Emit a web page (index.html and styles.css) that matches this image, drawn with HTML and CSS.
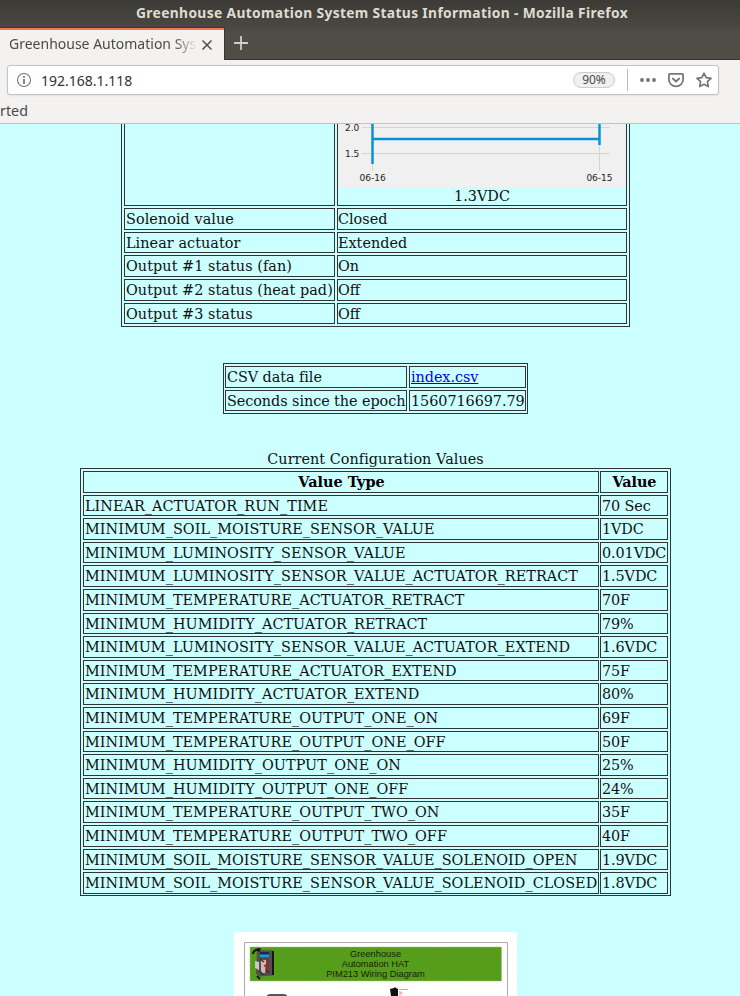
FILE: index.html
```html
<!DOCTYPE html>
<html lang="en">
<head>
<meta charset="utf-8">
<title>Greenhouse Automation System Status Information</title>
<link rel="stylesheet" href="styles.css">
</head>
<body>
<header class="browser">
  <div class="titlebar"><span class="window-title">Greenhouse Automation System Status Information - Mozilla Firefox</span></div>
  <div class="tabs">
    <div class="tab"><span class="tab-title">Greenhouse Automation System</span>
      <svg class="close" width="12" height="12" viewBox="0 0 12 12"><path d="M1.5 1.5l9 9m0-9l-9 9" stroke="#555" stroke-width="1.6" fill="none"/></svg>
    </div>
    <svg class="plus" width="14" height="14" viewBox="0 0 14 14"><path d="M7 0v14M0 7h14" stroke="#d0cec8" stroke-width="1.8"/></svg>
  </div>
  <div class="nav">
    <div class="urlbar">
      <svg width="16" height="16" viewBox="0 0 16 16" fill="none" stroke="#777"><circle cx="8" cy="8" r="6.5" stroke-width="1.1"/><path d="M8 7v5M8 4v1.8" stroke-width="1.8"/></svg>
      <span class="url">192.168.1.118</span>
      <span class="zoom">90%</span>
      <span class="divider"></span>
      <svg class="dots" width="16" height="16" viewBox="0 0 16 16" fill="#777"><circle cx="2" cy="8" r="2"/><circle cx="8" cy="8" r="2"/><circle cx="14" cy="8" r="2"/></svg>
      <svg class="pocket" width="16" height="16" viewBox="0 0 16 16" fill="none" stroke="#777" stroke-width="1.8" stroke-linejoin="round" stroke-linecap="round"><path d="M1.7 1.9h12.6q.8 0 .8.8v4.8a7.1 6.8 0 0 1-14.2 0V2.7q0-.8.8-.8z"/><path d="M4.8 6.5L8 9.5l3.2-3"/></svg>
      <svg class="star" width="16" height="16" viewBox="0 0 16 16" fill="none" stroke="#777" stroke-width="1.7" stroke-linejoin="round"><path d="M8 1.2l2.1 4.5 4.9.6-3.6 3.4.9 4.9L8 12.2l-4.3 2.4.9-4.9L1 6.3l4.9-.6z"/></svg>
    </div>
  </div>
  <div class="bookmarks">rted</div>
</header>
<main>
  <div class="table status">
    <div class="cell open"></div>
    <div class="cell open chart">
      <svg width="288" height="63" viewBox="338 124 288 63">
        <rect x="338" y="124" width="288" height="63" fill="#f0f0f0"/>
        <path d="M362 127.5H610M362 153.5H610M372.5 124V171M599.5 124V171" stroke="#d5d5d5"/>
        <path d="M372.5 124V164M372.5 139H599.5M599.5 124V145" stroke="#0a90d6" stroke-width="2.5" fill="none"/>
        <g class="ticks"><text x="345" y="130.5">2.0</text><text x="345" y="157">1.5</text><text x="359.6" y="181">06-16</text><text x="586.4" y="181">06-15</text></g>
      </svg>
      <div class="reading">1.3VDC</div>
    </div>
    <div class="cell">Solenoid value</div><div class="cell">Closed</div>
    <div class="cell">Linear actuator</div><div class="cell">Extended</div>
    <div class="cell">Output #1 status (fan)</div><div class="cell">On</div>
    <div class="cell">Output #2 status (heat pad)</div><div class="cell">Off</div>
    <div class="cell">Output #3 status</div><div class="cell">Off</div>
  </div>
  <div class="table csv">
    <div class="cell">CSV data file</div><div class="cell"><a href="index.csv">index.csv</a></div>
    <div class="cell">Seconds since the epoch</div><div class="cell">1560716697.79</div>
  </div>
  <div class="caption">Current Configuration Values</div>
  <div class="table config">
    <div class="cell head">Value Type</div><div class="cell head">Value</div>
    <div class="cell">LINEAR_ACTUATOR_RUN_TIME</div><div class="cell">70 Sec</div>
    <div class="cell">MINIMUM_SOIL_MOISTURE_SENSOR_VALUE</div><div class="cell">1VDC</div>
    <div class="cell">MINIMUM_LUMINOSITY_SENSOR_VALUE</div><div class="cell">0.01VDC</div>
    <div class="cell">MINIMUM_LUMINOSITY_SENSOR_VALUE_ACTUATOR_RETRACT</div><div class="cell">1.5VDC</div>
    <div class="cell">MINIMUM_TEMPERATURE_ACTUATOR_RETRACT</div><div class="cell">70F</div>
    <div class="cell">MINIMUM_HUMIDITY_ACTUATOR_RETRACT</div><div class="cell">79%</div>
    <div class="cell">MINIMUM_LUMINOSITY_SENSOR_VALUE_ACTUATOR_EXTEND</div><div class="cell">1.6VDC</div>
    <div class="cell">MINIMUM_TEMPERATURE_ACTUATOR_EXTEND</div><div class="cell">75F</div>
    <div class="cell">MINIMUM_HUMIDITY_ACTUATOR_EXTEND</div><div class="cell">80%</div>
    <div class="cell">MINIMUM_TEMPERATURE_OUTPUT_ONE_ON</div><div class="cell">69F</div>
    <div class="cell">MINIMUM_TEMPERATURE_OUTPUT_ONE_OFF</div><div class="cell">50F</div>
    <div class="cell">MINIMUM_HUMIDITY_OUTPUT_ONE_ON</div><div class="cell">25%</div>
    <div class="cell">MINIMUM_HUMIDITY_OUTPUT_ONE_OFF</div><div class="cell">24%</div>
    <div class="cell">MINIMUM_TEMPERATURE_OUTPUT_TWO_ON</div><div class="cell">35F</div>
    <div class="cell">MINIMUM_TEMPERATURE_OUTPUT_TWO_OFF</div><div class="cell">40F</div>
    <div class="cell">MINIMUM_SOIL_MOISTURE_SENSOR_VALUE_SOLENOID_OPEN</div><div class="cell">1.9VDC</div>
    <div class="cell">MINIMUM_SOIL_MOISTURE_SENSOR_VALUE_SOLENOID_CLOSED</div><div class="cell">1.8VDC</div>
  </div>
  <svg class="wiring" width="283" height="64" viewBox="234 932 283 64">
    <rect x="234" y="932" width="283" height="64" fill="#fff"/>
    <path d="M244.5 996V942.5H507.5V996" fill="none" stroke="#aaa"/>
    <rect x="250" y="947" width="251.5" height="34" fill="#579d1c"/>
    <rect x="250" y="947" width="251.5" height="34" fill="none" stroke="#9bc578" stroke-width=".7" stroke-dasharray="2 1"/>
    <path d="M257 950l16 .5v25l-13 1-4-3z" fill="#554e4e"/>
    <path d="M252.500 954q2-5 8-5M273 951v24M257 976l3 3M257 950l3 1" stroke="#151515" stroke-width="2" fill="none"/>
    <rect x="260" y="952" width="9" height="3" fill="#182b40"/>
    <rect x="260" y="954.500" width="9" height="2.5" fill="#199ce8"/>
    <path d="M255 961l4 1v8l-4-2z" fill="#c7c7c7"/>
    <path d="M261 960h5v5l-1 8h-4z" fill="#d4b7a7"/>
    <path d="M267 958l1 5-2 5 3 4M264 966l5-2" stroke="#a51f28" stroke-width="1.5" fill="none"/>
    <path d="M260 959l4 3m-4 9l3 4m3-5l3 3" stroke="#303438" stroke-width="1.5"/>
    <g class="diagram-title"><text x="375.5" y="956.7">Greenhouse</text><text x="375.5" y="967">Automation HAT</text><text x="375.5" y="977.3">PIM213 Wiring Diagram</text></g>
    <path d="M267 996v-1l3-1h14l3 1v1z" fill="#58545b"/>
    <path d="M390 989l4-1 1-1 1 1 2 1v7h-7z" fill="#111"/>
    <path d="M399 989.5h9M400 991v5M400 993h3" stroke="#ec7b85" stroke-width=".8" fill="none"/>
  </svg>
</main>
</body>
</html>
```
FILE: styles.css
```css
* { box-sizing: border-box; }
body { margin: 0; width: 740px; height: 996px; overflow: hidden; background: #cff; color: #111; font: 14.4px/20.6px "DejaVu Serif", serif; }
svg { display: block; flex: none; }
.browser { height: 124px; background: #f3f2f1; border-bottom: 1px solid #c4c2c0; font-family: "Noto Sans", sans-serif; color: #4a4a4a; }
.titlebar { height: 27px; background: linear-gradient(#3b3a36, #4b4842); color: #dfdbd2; font-size: 13.8px; font-weight: 700; line-height: 26px; display: flex; padding-left: 136px; white-space: nowrap; }
.window-title { letter-spacing: 0.35px; }
.tabs { height: 33px; background: linear-gradient(#4b4842, #504d46 20%); border-bottom: 1px solid #37352f; display: flex; }
.tab { width: 225px; height: 33px; flex: none; background: #f3f2f1; border-top: 1px solid #393631; border-right: 1px solid #393631; box-shadow: inset 0 2px #ef7b52; padding: 0 0 0 9px; display: flex; align-items: center; }
.tab-title { width: 188px; overflow: hidden; white-space: nowrap; font-size: 14px; line-height: 30px; mask-image: linear-gradient(90deg, #000 165px, transparent 188px); }
.close { margin-left: 4px; margin-top: 1px; }
.plus { margin: 9px 0 0 9px; }
.nav { height: 40px; padding: 5px 21px 5px 7px; }
.urlbar { height: 30px; border: 1px solid #c5c2bf; border-radius: 3px; background: #fff; box-shadow: 0 1px 2px #0001; display: flex; align-items: center; padding-left: 8px; }
.url { margin-left: 9px; padding-top: 2px; width: 532px; font-size: 14px; color: #333; }
.zoom { width: 42px; height: 16px; flex: none; border: 1px solid #ccc; border-radius: 8px; background: #f0f0f0; text-align: center; font-size: 12px; line-height: 14px; }
.divider { width: 1px; height: 22px; margin: 0 12px; background: #bbb; }
.pocket, .star { margin-left: 12px; }
.bookmarks { height: 23px; font-size: 14.3px; line-height: 22px; }
.table { display: grid; border: 1px solid #333; padding: 2px 2px; column-gap: 2px; row-gap: 2px; }
.cell { border: 1px solid #333; padding-left: 1px; white-space: nowrap; height: 21.63px; min-width: 0; }
.status { width: 509px; height: 203px; margin-left: 121px; border-top: 0; padding-top: 0; grid-template-columns: 211px 290px; grid-template-rows: 82px repeat(5, 21.65px); }
.status .cell:nth-child(odd) { letter-spacing: 0.06px; }
.status .cell:nth-child(even) { padding-left: 0; }
.status .open { height: 82px; border-top: 0; }
.reading { text-align: center; line-height: 18px; }
.ticks { font: 9px "DejaVu Sans", sans-serif; fill: #222; }
.csv { width: 305px; height: 51px; margin: 36px 0 0 223px; padding: 2px 1px; grid-template-columns: 182px 117px; grid-template-rows: repeat(2, 21.6px); letter-spacing: -0.06px; }
.csv a { color: #00e; }
.caption { height: 18px; line-height: 18px; margin: 36px 0 0 80px; width: 591px; text-align: center; letter-spacing: 0.04px; }
.config { width: 591px; height: 428px; margin-left: 80px; column-gap: 1px; grid-template-columns: 516px 68px; grid-template-rows: repeat(18, 21.6px); }
.config .cell:nth-child(odd) { letter-spacing: 0.05px; }
.config .cell:nth-child(even) { letter-spacing: -0.1px; }
.config .head { text-align: center; font-weight: 700; color: #000; letter-spacing: -0.15px; }
.wiring { margin: 36px 0 0 234px; }
.diagram-title { font: 9.3px "Liberation Sans", sans-serif; text-anchor: middle; fill: #142309; }
```
